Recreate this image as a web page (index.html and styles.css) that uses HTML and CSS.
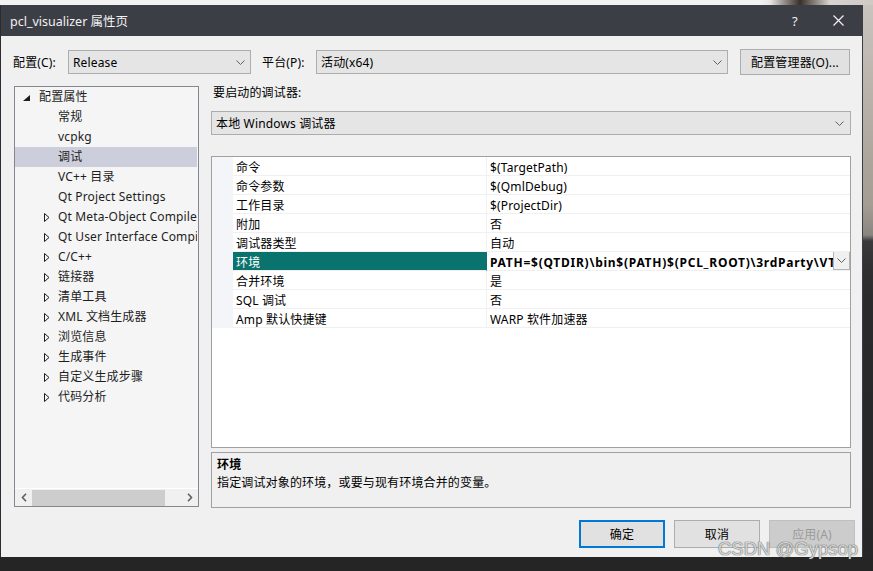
FILE: index.html
```html
<!DOCTYPE html>
<html lang="zh-CN">
<head>
<meta charset="utf-8">
<title>pcl_visualizer 属性页</title>
<link rel="stylesheet" href="styles.css">
</head>
<body>
<div class="screen">
  <div class="topstrip"></div>
  <div class="middle">
    <div class="leftedge"></div>
    <div class="dialog">
      <div class="titlebar">
        <span class="title">pcl_visualizer 属性页</span>
        <span class="help">?</span>
        <span class="close"><svg width="11" height="11" viewBox="0 0 11 11"><path d="M0.5 0.5 L10.5 10.5 M10.5 0.5 L0.5 10.5" stroke="#f2f2f2" stroke-width="1.2" fill="none"/></svg></span>
      </div>
      <div class="dbody">
        <div class="configrow">
          <span class="lbl lbl-config">配置(C):</span>
          <div class="select sel-config"><span>Release</span><svg class="chev" width="9" height="5" viewBox="0 0 9 5"><polyline points="0.5,0.5 4.5,4.5 8.5,0.5" fill="none" stroke="#606060"/></svg></div>
          <span class="lbl lbl-platform">平台(P):</span>
          <div class="select sel-platform"><span>活动(x64)</span><svg class="chev" width="9" height="5" viewBox="0 0 9 5"><polyline points="0.5,0.5 4.5,4.5 8.5,0.5" fill="none" stroke="#606060"/></svg></div>
          <button class="btn btn-mgr">配置管理器(O)...</button>
        </div>
        <div class="main">
          <div class="tree">
            <div class="treerows">
              <div class="trow l0"><span class="twisty"><svg width="7" height="6" viewBox="0 0 7 6"><polygon points="7,0 7,6 0,6" fill="#1e1e1e"/></svg></span>配置属性</div>
              <div class="trow l1"><span class="twisty"></span>常规</div>
              <div class="trow l1"><span class="twisty"></span>vcpkg</div>
              <div class="trow l1 sel"><span class="twisty"></span>调试</div>
              <div class="trow l1"><span class="twisty"></span>VC++ 目录</div>
              <div class="trow l1"><span class="twisty"></span>Qt Project Settings</div>
              <div class="trow l1"><span class="twisty"><svg class="tri" width="6" height="9" viewBox="0 0 6 9"><polygon points="0.5,0.5 5,4.5 0.5,8.5" fill="none" stroke="#1e1e1e"/></svg></span>Qt Meta-Object Compiler</div>
              <div class="trow l1"><span class="twisty"><svg class="tri" width="6" height="9" viewBox="0 0 6 9"><polygon points="0.5,0.5 5,4.5 0.5,8.5" fill="none" stroke="#1e1e1e"/></svg></span>Qt User Interface Compiler</div>
              <div class="trow l1"><span class="twisty"><svg class="tri" width="6" height="9" viewBox="0 0 6 9"><polygon points="0.5,0.5 5,4.5 0.5,8.5" fill="none" stroke="#1e1e1e"/></svg></span>C/C++</div>
              <div class="trow l1"><span class="twisty"><svg class="tri" width="6" height="9" viewBox="0 0 6 9"><polygon points="0.5,0.5 5,4.5 0.5,8.5" fill="none" stroke="#1e1e1e"/></svg></span>链接器</div>
              <div class="trow l1"><span class="twisty"><svg class="tri" width="6" height="9" viewBox="0 0 6 9"><polygon points="0.5,0.5 5,4.5 0.5,8.5" fill="none" stroke="#1e1e1e"/></svg></span>清单工具</div>
              <div class="trow l1"><span class="twisty"><svg class="tri" width="6" height="9" viewBox="0 0 6 9"><polygon points="0.5,0.5 5,4.5 0.5,8.5" fill="none" stroke="#1e1e1e"/></svg></span>XML 文档生成器</div>
              <div class="trow l1"><span class="twisty"><svg class="tri" width="6" height="9" viewBox="0 0 6 9"><polygon points="0.5,0.5 5,4.5 0.5,8.5" fill="none" stroke="#1e1e1e"/></svg></span>浏览信息</div>
              <div class="trow l1"><span class="twisty"><svg class="tri" width="6" height="9" viewBox="0 0 6 9"><polygon points="0.5,0.5 5,4.5 0.5,8.5" fill="none" stroke="#1e1e1e"/></svg></span>生成事件</div>
              <div class="trow l1"><span class="twisty"><svg class="tri" width="6" height="9" viewBox="0 0 6 9"><polygon points="0.5,0.5 5,4.5 0.5,8.5" fill="none" stroke="#1e1e1e"/></svg></span>自定义生成步骤</div>
              <div class="trow l1"><span class="twisty"><svg class="tri" width="6" height="9" viewBox="0 0 6 9"><polygon points="0.5,0.5 5,4.5 0.5,8.5" fill="none" stroke="#1e1e1e"/></svg></span>代码分析</div>
            </div>
            <div class="hscroll">
              <span class="sarrow"><svg width="6" height="9" viewBox="0 0 6 9"><polyline points="5,0.8 1.5,4.5 5,8.2" fill="none" stroke="#606060" stroke-width="1.6"/></svg></span>
              <span class="thumb"></span>
              <span class="strack"></span>
              <span class="sarrow"><svg width="6" height="9" viewBox="0 0 6 9"><polyline points="1,0.8 4.5,4.5 1,8.2" fill="none" stroke="#606060" stroke-width="1.6"/></svg></span>
            </div>
          </div>
          <div class="right">
            <div class="dbglabel">要启动的调试器:</div>
            <div class="select sel-debugger"><span>本地 Windows 调试器</span><svg class="chev" width="9" height="5" viewBox="0 0 9 5"><polyline points="0.5,0.5 4.5,4.5 8.5,0.5" fill="none" stroke="#606060"/></svg></div>
            <div class="grid">
              <div class="grow"><span class="gut"></span><span class="gname">命令</span><span class="gval">$(TargetPath)</span></div>
              <div class="grow"><span class="gut"></span><span class="gname">命令参数</span><span class="gval">$(QmlDebug)</span></div>
              <div class="grow"><span class="gut"></span><span class="gname">工作目录</span><span class="gval">$(ProjectDir)</span></div>
              <div class="grow"><span class="gut"></span><span class="gname">附加</span><span class="gval">否</span></div>
              <div class="grow"><span class="gut"></span><span class="gname">调试器类型</span><span class="gval">自动</span></div>
              <div class="grow gsel"><span class="gut"></span><span class="gname">环境</span><span class="gval bold"><span class="valtext">PATH=$(QTDIR)\bin$(PATH)$(PCL_ROOT)\3rdParty\VTK\bin</span><span class="ddbtn"><svg width="9" height="5" viewBox="0 0 9 5"><polyline points="0.5,0.5 4.5,4.5 8.5,0.5" fill="none" stroke="#606060"/></svg></span></span></div>
              <div class="grow"><span class="gut"></span><span class="gname">合并环境</span><span class="gval">是</span></div>
              <div class="grow"><span class="gut"></span><span class="gname">SQL 调试</span><span class="gval">否</span></div>
              <div class="grow"><span class="gut"></span><span class="gname">Amp 默认快捷键</span><span class="gval">WARP 软件加速器</span></div>
            </div>
            <div class="desc">
              <div class="desc-title">环境</div>
              <div class="desc-text">指定调试对象的环境，或要与现有环境合并的变量。</div>
            </div>
          </div>
        </div>
        <div class="buttons">
          <button class="btn btn-ok">确定</button>
          <button class="btn btn-cancel">取消</button>
          <button class="btn btn-apply">应用(A)</button>
        </div>
      </div>
    </div>
    <div class="outside"></div>
  </div>
  <div class="bottomstrip"></div>
  <div class="watermark">CSDN @Gypsop</div>
</div>
</body>
</html>
```

FILE: styles.css
```css
* { box-sizing: border-box; }
html, body { margin: 0; padding: 0; }
body {
  width: 873px;
  height: 571px;
  overflow: hidden;
  background: #252526;
  font-family: "Noto Sans", "Noto Sans CJK SC", sans-serif;
  font-size: 12px;
  letter-spacing: 0.15px;
  color: #000;
}
.screen {
  position: relative;
  width: 873px;
  height: 571px;
  display: flex;
  flex-direction: column;
}
.topstrip {
  height: 5px;
  background: linear-gradient(90deg, #f2f2f2 0, #f2f2f2 760px, #e6e6e6 770px, #3a3028 800px, #d8d4d0 830px, #cfcac4 873px);
}
.middle {
  height: 552px;
  display: flex;
}
.leftedge {
  width: 1px;
  background: #2c2c30;
}
.dialog {
  width: 862px;
  display: flex;
  flex-direction: column;
  border-right: 1px solid #3c3e46;
}
.titlebar {
  height: 31px;
  background: #3c3e46;
  display: flex;
  align-items: center;
  color: #f2f2f2;
  font-size: 12.5px;
  letter-spacing: 0;
  padding-left: 9px;
}
.title { flex: 1; }
.help { width: 20px; margin-right: 21px; font-size: 13px; }
.close { width: 11px; height: 11px; margin-right: 18px; display: flex; }
.dbody {
  flex: 1;
  background: #f0f0f0;
  display: flex;
  flex-direction: column;
}
.configrow {
  margin-top: 13px;
  height: 26px;
  display: flex;
  align-items: center;
  padding-left: 12px;
}
.lbl { display: inline-block; }
.lbl-config { width: 55px; }
.lbl-platform { width: 54px; margin-left: 11px; }
.select {
  height: 24px;
  background: #e5e5e5;
  border: 1px solid #adadad;
  display: flex;
  align-items: center;
  justify-content: space-between;
  padding: 0 5px 0 4px;
}
.sel-config { width: 183px; }
.sel-platform { width: 412px; }
.chev { display: block; }
.btn {
  font-family: inherit;
  font-size: 12px;
  letter-spacing: 0.15px;
  background: #e1e1e1;
  border: 1px solid #adadad;
  color: #000;
  padding: 0;
  margin: 0;
}
.btn-mgr { width: 110px; height: 26px; margin-left: 12px; }
.main {
  margin-top: 11px;
  display: flex;
  align-items: flex-start;
  padding-left: 13px;
}
.tree {
  width: 185px;
  height: 421px;
  border: 1px solid #828790;
  background: #f5f5f5;
  display: flex;
  flex-direction: column;
  color: #1e1e1e;
}
.treerows {
  flex: 1;
  padding-right: 1px;
  overflow: hidden;
}
.trow {
  height: 20px;
  line-height: 20px;
  display: flex;
  align-items: center;
  white-space: nowrap;
  overflow: hidden;
}
.trow.l0 { padding-left: 8px; }
.trow.l1 { padding-left: 28px; }
.trow.sel { background: #cccedb; }
.twisty {
  width: 15px;
  flex: none;
  display: flex;
  align-items: center;
}
.trow.l0 .twisty { width: 16px; }
.trow.l0 .twisty svg { margin-top: 2px; }
.tri { margin-left: 1px; }
.hscroll {
  height: 18px;
  border-top: 1px solid #ffffff;
  background: #f0f0f0;
  display: flex;
  align-items: center;
}
.sarrow {
  width: 17px;
  height: 16px;
  display: flex;
  align-items: center;
  justify-content: center;
}
.thumb {
  width: 133px;
  height: 16px;
  background: #cdcdcd;
}
.strack { flex: 1; }
.right {
  width: 640px;
  margin-left: 12px;
  display: flex;
  flex-direction: column;
}
.dbglabel {
  height: 14px;
  line-height: 14px;
  padding-left: 2px;
}
.sel-debugger {
  margin-top: 11px;
  width: 640px;
  padding-right: 6px;
}
.grid {
  margin-top: 21px;
  height: 292px;
  border: 1px solid #a0a0a0;
  background: #fff;
}
.grow {
  height: 19px;
  display: flex;
}
.gut {
  width: 21px;
  flex: none;
  background: #f3f5f8;
}
.gname {
  width: 254px;
  flex: none;
  padding-left: 3px;
  padding-top: 2px;
  line-height: 17px;
  border-bottom: 1px solid #f0f0f0;
  border-right: 1px solid #f0f0f0;
  white-space: nowrap;
}
.gval {
  flex: 1;
  padding-left: 3px;
  padding-top: 2px;
  line-height: 17px;
  border-bottom: 1px solid #f0f0f0;
  white-space: nowrap;
  overflow: hidden;
  display: flex;
}
.gsel .gname {
  background: #0b736e;
  color: #ffffff;
  border-right-color: #0b736e;
}
.gval.bold { font-weight: bold; padding-right: 0; padding-top: 0; }
.valtext { flex: 1; overflow: hidden; white-space: nowrap; letter-spacing: 0.75px; padding-top: 2px; }
.ddbtn {
  width: 17px;
  height: 19px;
  flex: none;
  border: 1px solid #b4b4b4;
  background: #f0f0f0;
  display: flex;
  align-items: center;
  justify-content: center;
  margin-top: -1px;
}
.desc {
  margin-top: 4px;
  height: 56px;
  border: 1px solid #a0a0a0;
  background: #f0f0f0;
  padding: 3px 5px 0;
}
.desc-title { font-weight: bold; line-height: 18px; }
.desc-text { line-height: 18px; }
.buttons {
  margin-top: 12px;
  display: flex;
  justify-content: flex-end;
  padding-right: 7px;
  gap: 9px;
}
.buttons .btn { width: 86px; height: 28px; }
.btn-ok { border: 2px solid #0078d7; }
.btn-apply {
  background: #cccccc;
  border-color: #bfbfbf;
  color: #9a9a9a;
}
.outside {
  width: 10px;
  background: linear-gradient(180deg, #c9c4be 0, #b8b2aa 90px, #a49d94 200px, #8a8580 230px, #3a3a3c 236px, #303032 262px, #2a2a2c 300px, #262628 552px);
}
.bottomstrip {
  flex: 1;
  background: #252526;
}
.watermark {
  position: absolute;
  left: 718px;
  top: 538px;
  font-family: "Liberation Sans", sans-serif;
  font-size: 18.5px;
  letter-spacing: 0;
  color: rgba(235, 235, 235, 0.85);
  text-shadow: 0 0 1px #5a5a5a, 0 0 1px #5a5a5a;
  white-space: nowrap;
}
```
